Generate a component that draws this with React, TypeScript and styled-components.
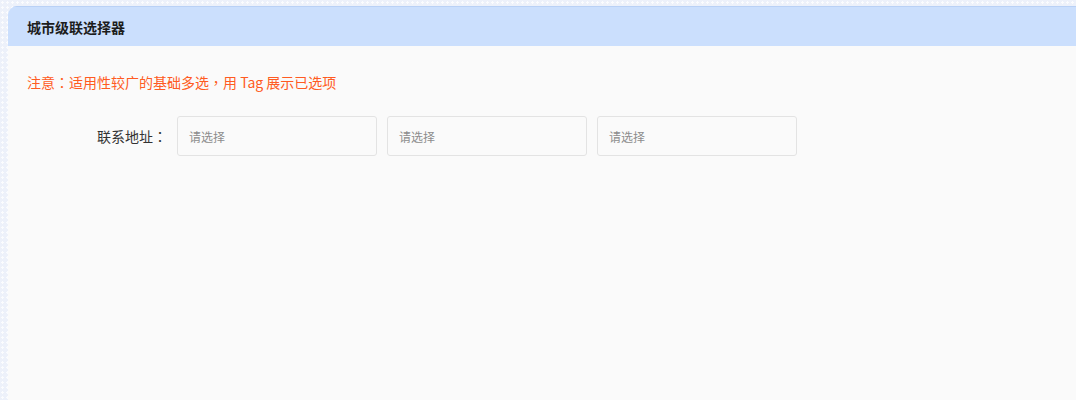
import { createGlobalStyle } from "styled-components";
import styled from "styled-components";

// ─── Global ───────────────────────────────────────────────────────────────────

const GlobalStyle = createGlobalStyle`
  html, body {
    margin: 0;
    padding: 0;
    height: 100%;
    overflow: hidden;
  }
  body {
    font-family: "Noto Sans CJK SC", "Noto Sans", "Liberation Sans", sans-serif;
    background-color: #edf1fa;
    background-image: radial-gradient(rgba(255,255,255,0.8) 1px, transparent 1.2px);
    background-size: 5px 5px;
  }
`;

// ─── Styled components ────────────────────────────────────────────────────────

const Page = styled.div`
  height: 400px;
  padding: 6px 0 0 8px;
  box-sizing: border-box;
  display: flex;
`;

const Card = styled.section`
  flex: 1;
  display: flex;
  flex-direction: column;
  background: #fafafa;
  border-top-left-radius: 9px;
  overflow: hidden;
`;

const Header = styled.header`
  height: 40px;
  box-sizing: border-box;
  display: flex;
  align-items: center;
  padding: 0 19px;
  background: #cbdffd;
  border-top: 1px solid #b9d1f6;
`;

const Title = styled.h2`
  margin: 0;
  font-size: 14px;
  font-weight: 700;
  color: #1c1c1c;
`;

const Body = styled.div`
  flex: 1;
  padding: 27px 19px;
`;

const Notice = styled.p`
  margin: 0 0 25px;
  font-size: 14px;
  line-height: 18px;
  color: #ff5b22;
`;

// full-width punctuation drawn centred, as in the reference font
const Punct = styled.span`
  font-family: "Noto Sans CJK TC", "Noto Sans CJK SC", sans-serif;
`;

const FormRow = styled.div`
  display: flex;
  align-items: center;
`;

const Label = styled.label`
  width: 150px;
  padding-right: 10px;
  box-sizing: border-box;
  text-align: right;
  font-size: 14px;
  color: #333;
`;

const Selects = styled.div`
  display: flex;
  gap: 10px;
`;

const Select = styled.div`
  width: 200px;
  height: 40px;
  box-sizing: border-box;
  border: 1px solid #e3e3e3;
  border-radius: 3px;
  display: flex;
  align-items: center;
  padding: 0 11px;
  font-size: 12px;
  color: #8c8c8c;
  background: #fafafa;
  cursor: pointer;
`;

// ─── Component ────────────────────────────────────────────────────────────────

export default function App() {
  const levels = ["province", "city", "district"];

  return (
    <>
      <GlobalStyle />
      <Page>
        <Card>
          <Header>
            <Title>城市级联选择器</Title>
          </Header>
          <Body>
            <Notice>
              注意<Punct>：</Punct>适用性较广的基础多选<Punct>，</Punct>用 Tag 展示已选项
            </Notice>
            <FormRow>
              <Label>联系地址<Punct>：</Punct></Label>
              <Selects>
                {levels.map(l => (
                  <Select key={l}>请选择</Select>
                ))}
              </Selects>
            </FormRow>
          </Body>
        </Card>
      </Page>
    </>
  );
}
